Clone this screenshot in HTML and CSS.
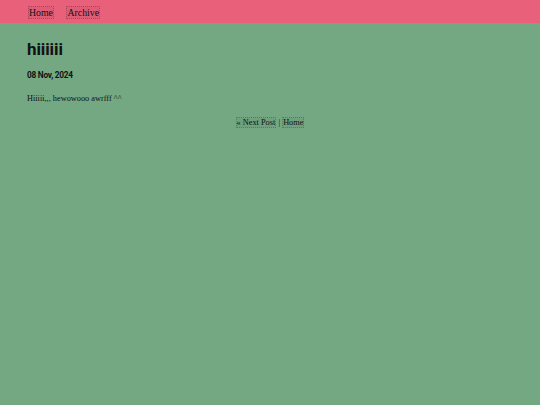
FILE: index.html
```html
<!DOCTYPE html>
<html>
<head>
<meta charset="utf-8">
<link rel="stylesheet" href="styles.css">
</head>
<body>
<header class="topbar">
  <nav class="topnav">
    <a class="link" href="#">Home</a>
    <a class="link" href="#">Archive</a>
  </nav>
</header>
<main class="content">
  <h1 class="title">hiiiiii</h1>
  <div class="date">08 Nov, 2024</div>
  <p class="text">Hiiiii,,, hewowooo awrfff ^^</p>
  <div class="postnav"><a class="link" href="#">« Next Post</a> | <a class="link" href="#">Home</a></div>
</main>
</body>
</html>
```
FILE: styles.css
```css
html, body {
  margin: 0;
  padding: 0;
}
body {
  background: #74a882;
  font-family: "Liberation Serif", "Times New Roman", serif;
  color: #111111;
  width: 540px;
  height: 405px;
}
.topbar {
  background: #e8607a;
  height: 23px;
  display: flex;
  align-items: center;
  padding: 0 28px;
}
.topnav {
  display: flex;
  gap: 12.5px;
  font-size: 9.8px;
  line-height: 11px;
  padding-top: 1px;
}
.link {
  color: #111111;
  text-decoration: none;
  border: 1px dotted rgba(0, 0, 0, 0.22);
  background: rgba(0, 0, 0, 0.04);
}
.content {
  padding: 0 27px;
}
.title {
  font-family: Roboto, "Liberation Sans", sans-serif;
  font-weight: 700;
  font-size: 17px;
  margin: 16px 0 0;
  line-height: 20px;
  letter-spacing: -0.1px;
}
.date {
  font-family: Roboto, "Liberation Sans", sans-serif;
  font-weight: 700;
  font-size: 8.3px;
  letter-spacing: -0.25px;
  margin-top: 11px;
}
.text {
  font-size: 8.3px;
  margin: 14px 0 0;
}
.postnav {
  margin-top: 15px;
  text-align: center;
  font-size: 8.3px;
}
```
